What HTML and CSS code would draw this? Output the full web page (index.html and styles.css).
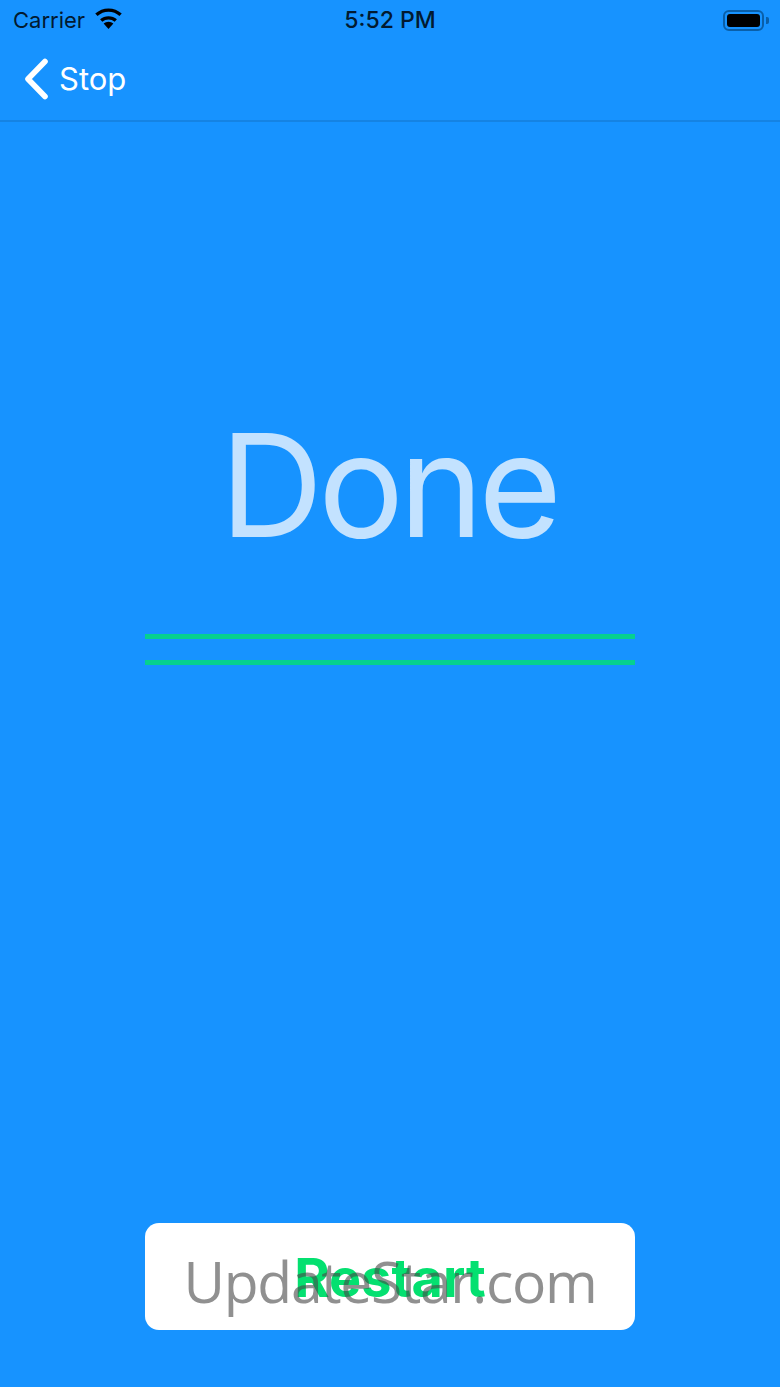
FILE: index.html
```html
<!DOCTYPE html>
<html lang="en">
<head>
<meta charset="utf-8">
<title>Done</title>
<link rel="stylesheet" href="styles.css">
</head>
<body>
<div class="app">
  <div class="status">
    <div class="status-left">
      <span class="carrier">Carrier</span>
      <svg class="wifi" width="27" height="21" viewBox="0 0 27 21"><path d="M13.5 21 8.6 15.6a7.2 7.2 0 0 1 9.8 0Z" fill="#000"/><path d="M6.2 12.6a11 11 0 0 1 14.6 0" fill="none" stroke="#000" stroke-width="3.4"/><path d="M1.4 6.8a18 18 0 0 1 24.2 0" fill="none" stroke="#000" stroke-width="3.4"/></svg>
    </div>
    <span class="time">5:52 PM</span>
    <div class="status-right">
      <div class="battery"><div class="battery-fill"></div></div>
      <div class="battery-cap"></div>
    </div>
  </div>
  <nav class="nav">
    <svg class="chevron" width="26" height="42" viewBox="0 0 26 42"><path d="M22 3.5 5 21l17 17.5" fill="none" stroke="#fff" stroke-width="5.6" stroke-linecap="round" stroke-linejoin="round"/></svg>
    <span class="back">Stop</span>
  </nav>
  <main class="main">
    <h1 class="title">Done</h1>
    <div class="rules">
      <div class="rule"></div>
      <div class="rule"></div>
    </div>
    <button class="restart" type="button">Restart</button>
  </main>
  <div class="watermark">UpdateStar.com</div>
</div>
</body>
</html>
```
FILE: styles.css
```css
* { box-sizing: border-box; }
html, body { margin: 0; padding: 0; }
body { font-family: Inter, "Liberation Sans", sans-serif; background: #1793ff; }
.app { position: relative; width: 780px; height: 1387px; display: flex; flex-direction: column; background: #1793ff; overflow: hidden; }
.status { height: 40px; display: flex; align-items: center; justify-content: space-between; padding: 0 11px 0 13px; position: relative; color: #021a30; }
.status-left { display: flex; align-items: center; gap: 10px; }
.carrier { font-size: 22px; line-height: 40px; color: #021a30; }
.wifi { margin-top: -3px; }
.time { position: absolute; left: 0; right: 0; text-align: center; font-size: 23px; font-weight: 500; line-height: 40px; color: #021a30; pointer-events: none; }
.status-right { display: flex; align-items: center; gap: 2px; }
.battery { width: 41px; height: 21px; border: 2px solid #0a5fa8; border-radius: 6px; padding: 2px; }
.battery-fill { width: 100%; height: 100%; background: #000; border-radius: 3px; }
.battery-cap { width: 3px; height: 7px; background: #0a5fa8; border-radius: 0 2px 2px 0; }
.nav { height: 82px; display: flex; align-items: center; padding: 0 0 2px 23px; gap: 10px; border-bottom: 2px solid #1583e3; }
.back { color: #fff; font-size: 31px; line-height: 40px; }
.main { flex: 1; display: flex; flex-direction: column; align-items: center; padding-top: 278px; }
.title { margin: 0 0 0 -3px; font-size: 143px; font-weight: 400; line-height: 170px; color: #c3e2ff; letter-spacing: -5px; }
.rules { width: 490px; display: flex; flex-direction: column; gap: 21px; margin-top: 64px; }
.rule { height: 5px; background: #06d08f; }
.restart { margin-top: 558px; width: 490px; height: 107px; border: 0; border-radius: 14px; background: #fff; color: #04e070; font: 700 54px/109px Inter, "Liberation Sans", sans-serif; padding: 0; }
.watermark { position: absolute; left: 0; right: 0; top: 1239px; text-align: center; font-family: "Open Sans", sans-serif; font-size: 57px; font-weight: 400; line-height: 84px; letter-spacing: -1.3px; color: rgba(70, 70, 70, 0.6); pointer-events: none; }
```
